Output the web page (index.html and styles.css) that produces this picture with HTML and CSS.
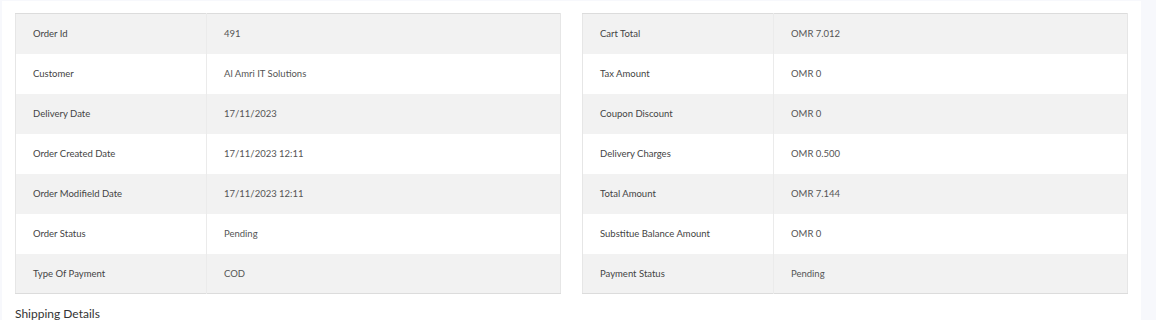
FILE: index.html
```html
<!DOCTYPE html>
<html>
<head>
<meta charset="utf-8">
<link rel="stylesheet" href="styles.css">
</head>
<body>
<div class="card">
  <div class="tables">
    <table class="info">
      <colgroup><col class="c1"><col class="c2"></colgroup>
      <tr><td class="lbl">Order Id</td><td>491</td></tr>
      <tr><td class="lbl">Customer</td><td>Al Amri IT Solutions</td></tr>
      <tr><td class="lbl">Delivery Date</td><td>17/11/2023</td></tr>
      <tr><td class="lbl">Order Created Date</td><td>17/11/2023 12:11</td></tr>
      <tr><td class="lbl">Order Modifield Date</td><td>17/11/2023 12:11</td></tr>
      <tr><td class="lbl">Order Status</td><td>Pending</td></tr>
      <tr><td class="lbl">Type Of Payment</td><td>COD</td></tr>
    </table>
    <table class="info">
      <colgroup><col class="c1"><col class="c2"></colgroup>
      <tr><td class="lbl">Cart Total</td><td>OMR 7.012</td></tr>
      <tr><td class="lbl">Tax Amount</td><td>OMR 0</td></tr>
      <tr><td class="lbl">Coupon Discount</td><td>OMR 0</td></tr>
      <tr><td class="lbl">Delivery Charges</td><td>OMR 0.500</td></tr>
      <tr><td class="lbl">Total Amount</td><td>OMR 7.144</td></tr>
      <tr><td class="lbl">Substitue Balance Amount</td><td>OMR 0</td></tr>
      <tr><td class="lbl">Payment Status</td><td>Pending</td></tr>
    </table>
  </div>
  <h4 class="section">Shipping Details</h4>
</div>
</body>
</html>
```
FILE: styles.css
```css
html, body {
  margin: 0;
  padding: 0;
}
body {
  background: #f7f8fc;
  font-family: Lato, "Noto Sans", sans-serif;
  color: #444;
  overflow: hidden;
}
.card {
  box-sizing: border-box;
  background: #fff;
  margin: 1px 0 0 2px;
  width: 1139px;
  height: 319px;
  padding: 12px 13px 0 13px;
  overflow: hidden;
}
.tables {
  display: flex;
  gap: 21px;
}
.info {
  width: 546px;
  border-collapse: collapse;
  border: 1px solid #e6e6e6;
  border-top: 1px solid #dcdcdc;
  border-bottom: 1px solid #dcdcdc;
  font-size: 9.5px;
  table-layout: fixed;
}
.info .c1 {
  width: 191px;
}
.info tr {
  height: 40px;
}
.info tr:nth-child(odd) {
  background: #f2f2f2;
}
.info td {
  padding: 0 0 0 17px;
  vertical-align: middle;
  color: #555;
  border: none;
}
.info td.lbl {
  border-right: 1px solid #ebebeb;
  color: #444;
}
.section {
  margin: 12px 0 0 0;
  font-size: 12px;
  font-weight: 400;
  color: #333;
}
```
